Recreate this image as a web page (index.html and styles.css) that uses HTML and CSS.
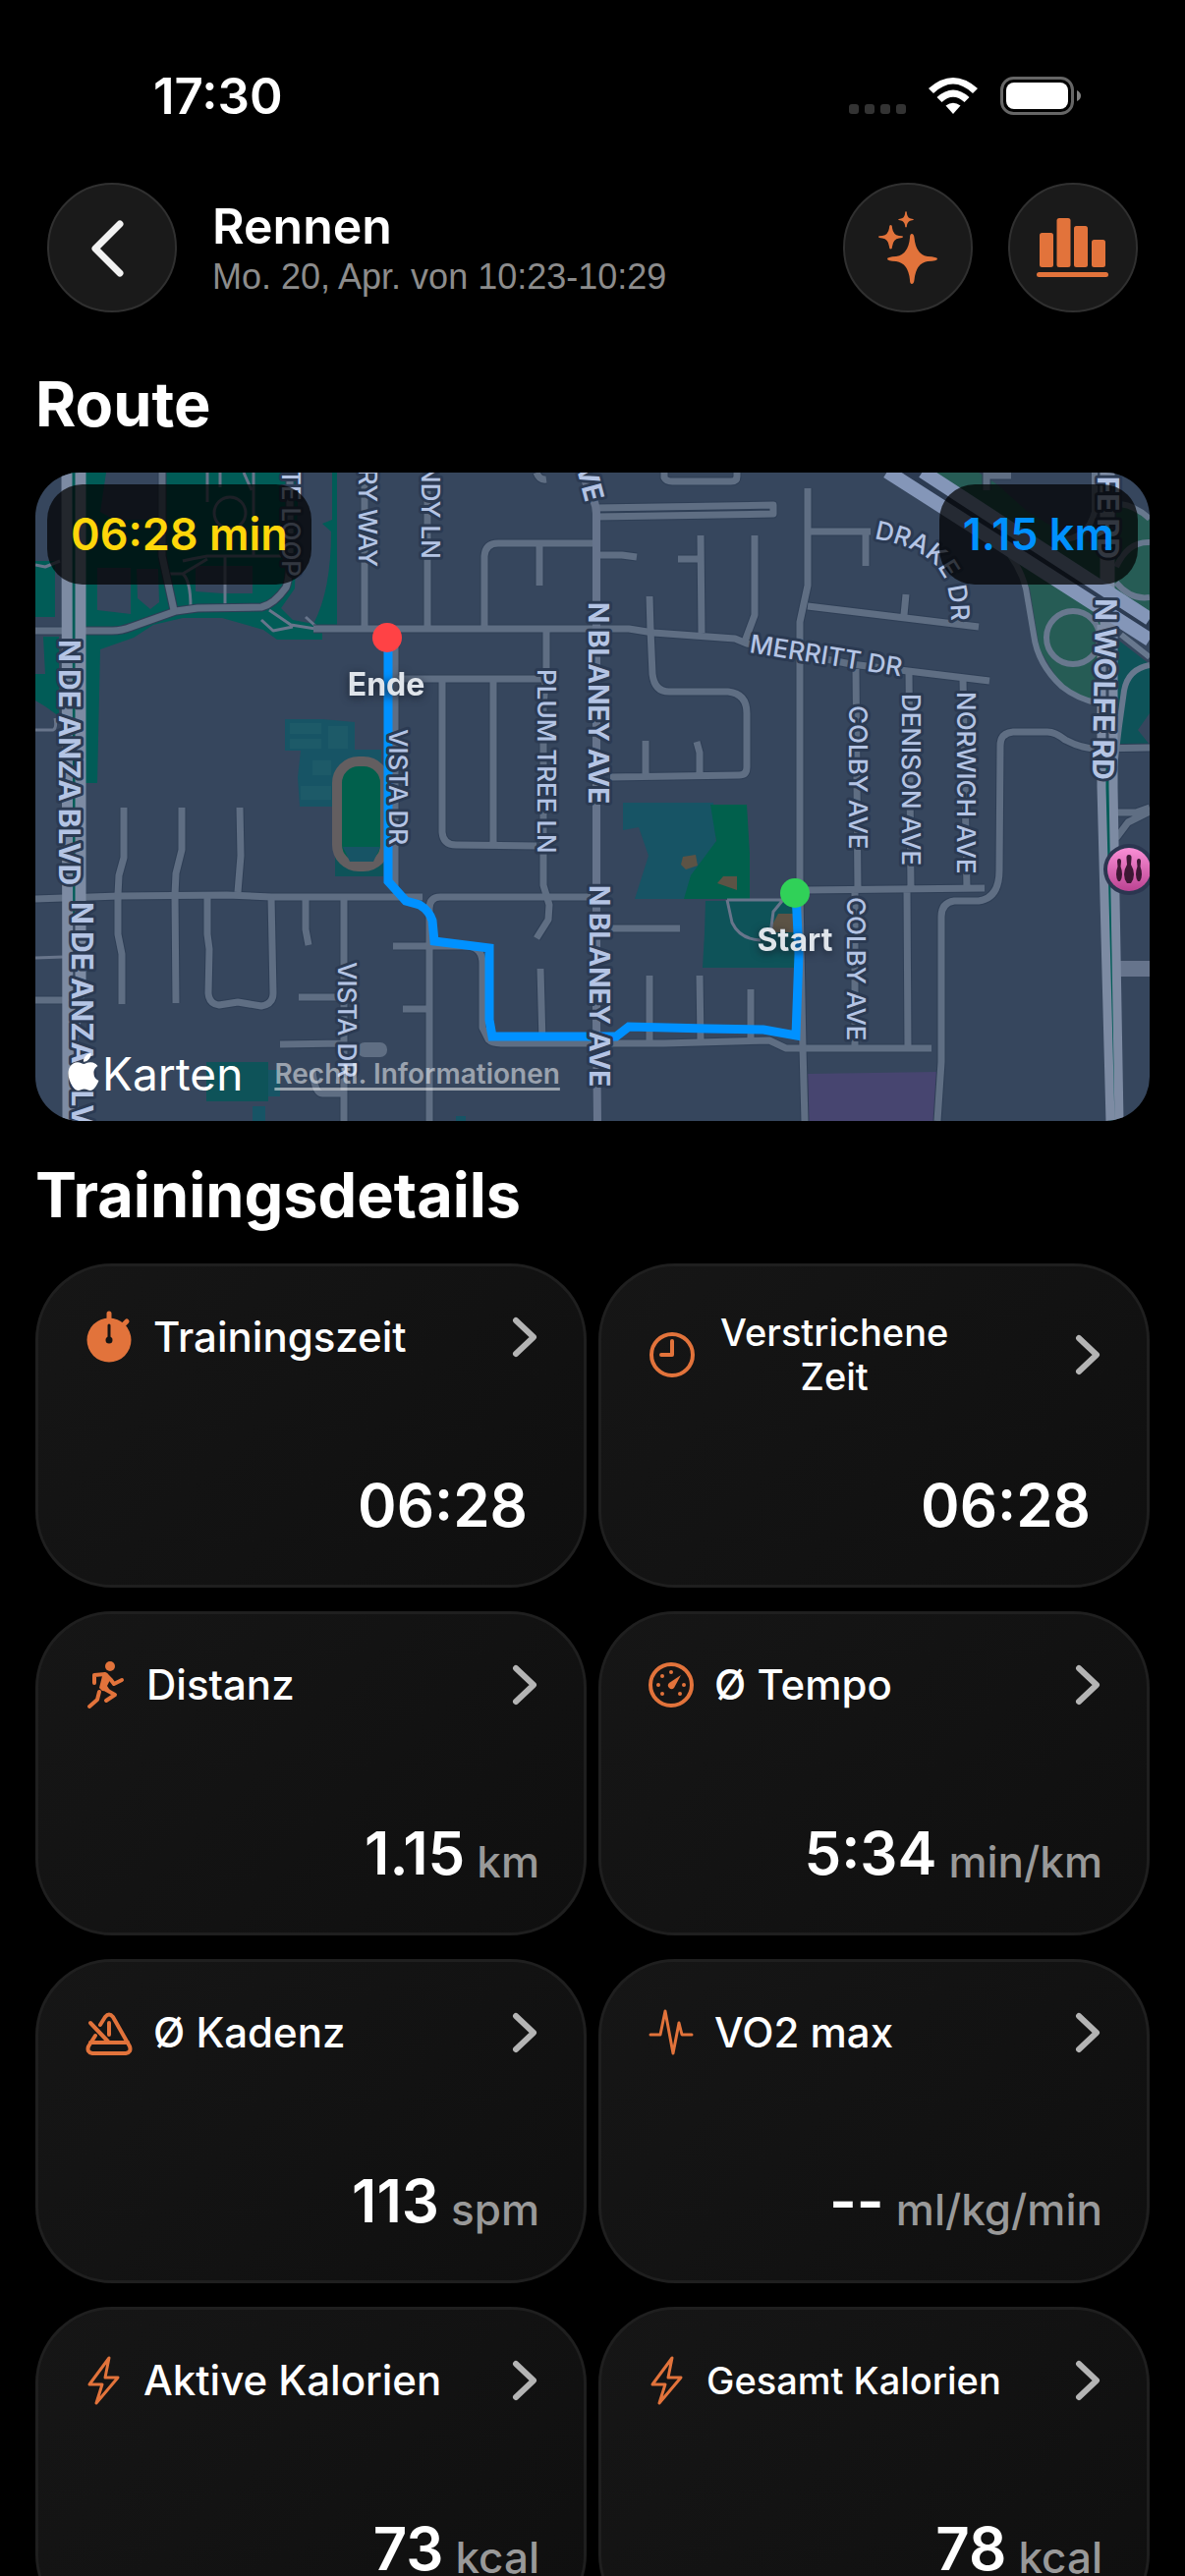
FILE: index.html
```html
<!DOCTYPE html>
<html lang="de">
<head>
  <meta charset="UTF-8" />
  <meta name="viewport" content="width=device-width, initial-scale=1.0"/>
  <title>Rennen</title>
  <link rel="stylesheet" href="styles.css">
</head>
<body>
  <div class="status-bar">
    <span class="clock">17:30</span>
    <div class="status-icons">
      <svg width="58" height="40" viewBox="0 0 58 40" fill="#333333">
        <rect x="0" y="28" width="10" height="10" rx="3"/>
        <rect x="16" y="28" width="10" height="10" rx="3"/>
        <rect x="32" y="28" width="10" height="10" rx="3"/>
        <rect x="48" y="28" width="10" height="10" rx="3"/>
      </svg>
      <svg width="52" height="40" viewBox="0 0 52 40" fill="#ffffff">
        <path d="M1 12Q26-10 51 12L46 17Q26-2 6 17Z"/>
        <path d="M9.500 21Q26 6 42.500 21L37.500 26Q26 15.500 14.500 26Z"/>
        <path d="M18.500 29.500Q26 24 33.500 29.500L26 38Z"/>
      </svg>
      <svg width="83" height="40" viewBox="0 0 83 40">
        <rect x="1.500" y="1.500" width="72" height="36" rx="12" fill="none" stroke="#666666" stroke-width="3"/>
        <rect x="6" y="6" width="63" height="27" rx="8" fill="#ffffff"/>
        <path d="M78 14Q82 16 82 19.500T78 25Z" fill="#808080"/>
      </svg>
    </div>
  </div>

  <header class="header">
    <button class="round-button" aria-label="Zurück">
      <svg viewBox="0 0 132 132"><path d="M74 42L49 67L74 92" fill="none" stroke="#f2f2f2" stroke-width="7" stroke-linecap="round" stroke-linejoin="round"/></svg>
    </button>
    <div class="header-text">
      <h1>Rennen</h1>
      <p>Mo. 20, Apr. von 10:23-10:29</p>
    </div>
    <button class="round-button" aria-label="Zusammenfassung">
      <svg viewBox="0 0 132 132" fill="#e2733b">
        <path d="M70 52Q72 52 72.500 56Q74 73 86 75Q96 75.500 96 77.500T86 80Q74 82 72.500 99Q72 103 70 103T68 99Q66.500 82 54 80Q45 79.500 45 77.500T54 75Q66.500 73 68 56Q68 52 70 52Z"/>
        <path d="M48.500 43Q50 43 50 46Q51 53 57 54Q61 54 61 55T57 56.500Q51 57 50 65Q50 67.500 48.500 67.500T47 65Q46 57 40 56.500Q36 56 36 55T40 54Q46 53 47 46Q47 43 48.500 43Z"/>
        <path d="M64 29Q65 29 65 32Q66 36 69 36.500Q72 37 72 37.500T69 38.500Q66 39 65 43Q65 45.500 64 45.500T63 43Q62 39 59 38.500Q56 38 56 37.500T59 36.500Q62 36 63 32Q63 29 64 29Z"/>
      </svg>
    </button>
    <button class="round-button" aria-label="Diagramme">
      <svg viewBox="0 0 132 132" fill="#e2733b">
        <rect x="32" y="51" width="14" height="35" rx="2.500"/>
        <rect x="49.500" y="36" width="14" height="50" rx="2.500"/>
        <rect x="67" y="44" width="14" height="42" rx="2.500"/>
        <rect x="85" y="58" width="14" height="28" rx="2.500"/>
        <rect x="29" y="91" width="73" height="5" rx="2.500"/>
      </svg>
    </button>
  </header>

  <main>
    <section>
      <h2>Route</h2>
      <div class="map-card">
        <svg class="map" viewBox="0 0 1134 660" role="img" aria-label="Karte der Route">
          <defs>
            <linearGradient id="pink" x1="0" y1="0" x2="0" y2="1">
              <stop offset="0" stop-color="#f98fd6"/>
              <stop offset="1" stop-color="#bb4392"/>
            </linearGradient>
            <path id="drake" d="M853 67Q902 76 919 98Q932 114 932 150"/>
            <g id="streets">
              <path d="M0 161H78Q88 161 98 157L143 141L165 138L230 137Q243 134 255 117Q259 108 259 80V0"/>
              <path d="M283 159H604L629 163L712 169L724 174L830 195L971 212"/>
              <path d="M335 0V159M129 0V85L141 140M399 0V159M457 159V85Q458 72 471 72H571M513 72V115"/>
              <path d="M571 36L751 33V42L571 45M640 0V5Q642 9 648 9H708Q714 9 714 4V0M510 0Q513 8 520 7M571 84H597L612 86"/>
              <path d="M677 64L678 163M654 88H677M732 64V145L722 172"/>
              <path d="M625 126L626 160L628 205Q630 223 645 223H705Q724 225 724 245V300Q724 308 716 308L585 310M621 273V307M673 274L676 285V306"/>
              <path d="M520 159V200L517 240V420L523 440L522 455L510 474M369 210H517M414 210V366Q415 379 428 379L510 380M466 210V379"/>
              <path d="M366 159V424M0 434L85 431L195 430L240 432H394M401 660V444Q401 432 412 432H565"/>
              <path d="M90 341V392L85 410L84 430V470L88 490V541M149 341V384L143 408L142 430L143 540M208 341L209 390L206 427"/>
              <path d="M175 432V470L177 485L176 530Q177 541 187 542L206 539L230 543Q242 541 242 530L240 432M275 434V465L278 481"/>
              <path d="M314 432V660M268 534H314M249 582L314 581M333 587H354M282 608Q284 632 292 632H314M0 537H28"/>
              <path d="M364 482H440Q455 483 455 500V565L461 577Q465 581 475 581H640L747 578L764 586H912M374 546H401"/>
              <path d="M514 505L516 580M625 512V578M676 512L677 578M728 526V576M585 464H656"/>
              <path d="M786 16V115L778 152V430L781 586L783 660M787 60H850M845 61V95M786 136L960 157M886 124L884 145M938 142V153"/>
              <path d="M835 200L837 425M834 425V585M889 203L891 424M887 425L888 585M944 210L948 424M784 425L966 423"/>
              <path d="M1134 280L1080 281Q1065 281 1048 272Q1038 264 1030 264H995Q982 265 982 278L981 405Q981 433 960 436H935Q922 438 922 452V600L918 660"/>
              <path d="M968 0V18M968 3H993M1098 346H1120L1134 341M1134 345L1112 356L1100 372"/>
            </g>
          </defs>
          <rect width="1134" height="660" fill="#36465d"/>

          <!-- parks, school grounds, mall -->
          <g fill="#015c57">
            <path d="M52 0H307V155L292 160V170H246L232 160L190 148H150L120 155L100 168L66 180L63 316H36V0Z"/>
            <path d="M0 90H20V147H0ZM8 167H24V248L10 238L0 232V205H10Z"/>
          </g>
          <g fill="#36465d">
            <path d="M72 0H125V48H80L66 40ZM63 97H97V144L63 140ZM103 98H125L126 132L117 139L104 128Z"/>
            <path d="M163 95H221V123H190L163 121ZM268 0H302V48L292 52L301 60Q301 120 283 154L262 150L250 138L264 118Z"/>
          </g>
          <g fill="#265c55">
            <path d="M915 0H960L1134 110V150L1090 150L1085 237L1045 218L1022 180L1012 118L985 80Z"/>
            <path d="M1100 32Q1120 35 1134 48V130L1100 112Z"/>
          </g>
          <path d="M1095 165L1134 195V245L1122 262L1134 277L1100 276Z" fill="#0e5359"/>
          <path d="M965 0H1090V65Q1070 72 1050 64L1010 40Z" fill="#36465d"/>
          <g fill="#175465">
            <path d="M254 251H292L325 254V282H352V340H269L267 310L270 283H254Z"/>
            <path d="M598 336H690L693 385L660 434H610L624 390L614 361L598 364Z"/>
            <path d="M221 645H234V660H221ZM234 608H249V635H234ZM428 655H438V660H428Z"/>
          </g>
          <path d="M259 255H291V266H259ZM259 271H291V281H259ZM298 258H318V281H298ZM282 293H301V308H282ZM270 319H301V333H270Z" fill="#1d5a68"/>
          <path d="M305 391H354V411H305ZM682 436H778V504H679L681 469ZM174 600H237V640H174Z" fill="#0e5359"/>
          <rect x="307" y="294" width="49" height="107" rx="22" fill="#01604c" stroke="#635e60" stroke-width="10"/>
          <path d="M313 381H351L344 396H320Z" fill="#175465"/>
          <path d="M687 338H724L727 388V434H660L667 410L693 375Z" fill="#01604c"/>
          <path d="M659 391L672 389L674 400L662 404L657 399ZM700 411H714V425L694 418ZM756 449H775V468H746Z" fill="#5c5345"/>
          <path d="M786 612L917 610V660H787Z" fill="#474570"/>

          <g class="footpaths">
            <path d="M175 0V30M188 0V15M212 0L220 18M222 0V85M150 90Q158 88 175 85H250M193 85V137M134 103H150Q158 110 158 137M150 103L175 88M238 140L260 155L285 159M230 150L242 161L262 157M275 147L285 156M0 94L10 96L25 90M0 262H18Q22 260 20 250M0 494L28 493"/>
            <circle cx="198" cy="41" r="16"/>
            <path d="M704 435H762M704 435L709 458Q717 475 738 476M760 436L751 447L748 470"/>
          </g>
          <use href="#streets" class="street-edge"/>
          <use href="#streets" class="street"/>
          <rect x="328" y="580" width="30" height="15" rx="7" fill="#5f6e83"/>

          <g class="ramps">
            <path d="M960 50Q1000 84 1008 118L1016 165Q1020 195 1045 218Q1060 230 1082 235"/>
            <circle cx="1056" cy="168" r="27"/>
            <path d="M1134 47Q1120 34 1104 32M1134 71Q1112 70 1100 96M1100 112Q1115 130 1134 127M1134 196Q1112 200 1108 222L1103 258L1098 300M1105 165L1134 188M1078 0V40Q1070 70 1040 68"/>
          </g>
          <g fill="none" stroke="#66748c">
            <path d="M556 0L568 28Q571 34 571 42V560L572 660" stroke-width="8"/>
            <path d="M1095 505H1134" stroke-width="16"/>
          </g>
          <path d="M39 0V460M1089 275L1096 660" fill="none" stroke="#015c57" stroke-width="6"/>
          <g fill="none" stroke="#7d8ba3">
            <path d="M32 0L33 660M46 0V520L38 580V660" stroke-width="11"/>
            <path d="M1091 0V160" stroke-width="15"/>
            <path d="M1085 155V320L1094 660M1097 155V320L1103 660" stroke-width="9"/>
          </g>
          <g fill="none">
            <path d="M885-1L1134 160" stroke="#2c3b52" stroke-width="14"/>
            <path d="M867-1L1134 170M903-1L1134 149" stroke="#8496b8" stroke-width="14"/>
          </g>

          <path class="route" d="M774 428L777 490L774 573L741 567L684 566L604 564L591 574H465L462 557V484L406 477L404 456Q401 446 391 440L377 436L359 416V168"/>

          <g class="labels">
            <text transform="translate(251 106) rotate(90)" text-anchor="end">TE LOOP</text>
            <text transform="translate(329 96) rotate(90)" text-anchor="end">RY WAY</text>
            <text transform="translate(393 88) rotate(90)" text-anchor="end">NDY LN</text>
            <text transform="translate(511 200) rotate(90)">PLUM TREE LN</text>
            <text transform="translate(360 261) rotate(90)">VISTA DR</text>
            <text transform="translate(308 498) rotate(90)">VISTA DR</text>
            <text transform="translate(828 237) rotate(90)">COLBY AVE</text>
            <text transform="translate(826 432) rotate(90)">COLBY AVE</text>
            <text transform="translate(882 225) rotate(90)">DENISON AVE</text>
            <text transform="translate(938 223) rotate(90)">NORWICH AVE</text>
            <text transform="translate(726 183) rotate(9)">MERRITT DR</text>
            <text><textPath href="#drake">DRAKE DR</textPath></text>
          </g>
          <g class="labels labels-medium">
            <text transform="translate(560 31) rotate(75)" text-anchor="end">VE</text>
            <text transform="translate(563 132) rotate(90)">N BLANEY AVE</text>
            <text transform="translate(564 420) rotate(90)">N BLANEY AVE</text>
          </g>
          <g class="labels labels-large">
            <text transform="translate(24 170) rotate(90)">N DE ANZA BLVD</text>
            <text transform="translate(37 437) rotate(90)">N DE ANZA BLVD</text>
            <text transform="translate(1081 88) rotate(90)" text-anchor="end">FE RD</text>
            <text transform="translate(1079 128) rotate(91)">N WOLFE RD</text>
          </g>

          <circle cx="1113" cy="404" r="26" fill="#2b3650"/>
          <circle cx="1113" cy="404" r="22" fill="url(#pink)"/>
          <g fill="#3c1733">
            <path d="M1113 389Q1116 389 1115.500 393L1115 399Q1118 404 1118 409T1115 418H1111Q1108 414 1108 409T1111 399L1110.500 393Q1110 389 1113 389Z"/>
            <path d="M1103 393Q1105 393 1105 396L1104.500 401Q1106 405 1106 409T1104 416H1102Q1100 413 1100 409T1101.500 401L1101 396Q1101 393 1103 393ZM1123 393Q1125 393 1125 396L1124.500 401Q1126 405 1126 409T1124 416H1122Q1120 413 1120 409T1121.500 401L1121 396Q1121 393 1123 393Z"/>
          </g>

          <circle cx="358" cy="168" r="15" fill="#ff4245"/>
          <circle cx="773" cy="428" r="15" fill="#30d158"/>
          <g class="pin-labels">
            <text x="357" y="227">Ende</text>
            <text x="773" y="487">Start</text>
          </g>
        </svg>
        <span class="badge badge-time">06:28 min</span>
        <span class="badge badge-distance">1.15 km</span>
        <div class="map-credit">
          <span class="brand">
            <svg width="38" height="38" viewBox="0 0 24 24" fill="#ffffff"><path d="M12.152 6.896c-.948 0-2.415-1.078-3.960-1.040-2.040.027-3.910 1.183-4.961 3.014-2.117 3.675-.546 9.103 1.519 12.090 1.013 1.454 2.208 3.090 3.792 3.039 1.520-.065 2.090-.987 3.935-.987 1.831 0 2.350.987 3.960.948 1.637-.026 2.676-1.480 3.676-2.948 1.156-1.688 1.636-3.325 1.662-3.415-.039-.013-3.182-1.221-3.220-4.857-.026-3.040 2.480-4.494 2.597-4.559-1.429-2.090-3.623-2.324-4.390-2.376-2-.156-3.675 1.090-4.610 1.090zM15.530 3.830c.843-1.012 1.400-2.427 1.245-3.830-1.207.052-2.662.805-3.532 1.818-.780.896-1.454 2.338-1.273 3.714 1.338.104 2.715-.688 3.559-1.701"/></svg><span>Karten</span>
          </span>
          <a href="#" class="legal">Rechtl. Informationen</a>
        </div>
      </div>
    </section>

    <section>
      <h2>Trainingsdetails</h2>
      <div class="cards">
        <a href="#" class="card">
          <div class="card-head">
            <svg class="icon" width="48" height="54" viewBox="0 0 48 54">
              <circle cx="24" cy="30" r="22.500" fill="#e2733b"/>
              <path d="M24 3V12M39 14L42 11" stroke="#e2733b" stroke-width="5" stroke-linecap="round"/>
              <path d="M24 15V30" stroke="#141414" stroke-width="3" stroke-linecap="round"/>
              <circle cx="24" cy="30" r="3.500" fill="#141414"/>
            </svg>
            <span class="label">Trainingszeit</span>
            <svg class="chevron" viewBox="0 0 28 42"><path d="M4 4L22 21L4 38"/></svg>
          </div>
          <div class="card-value"><strong>06:28</strong><span></span></div>
        </a>
        <a href="#" class="card">
          <div class="card-head">
            <svg class="icon line" width="52" height="54" viewBox="0 0 52 54">
              <circle cx="24" cy="27" r="21"/>
              <path d="M24 13V27H13"/>
            </svg>
            <span class="label label-small">Verstrichene<br>Zeit</span>
            <svg class="chevron" viewBox="0 0 28 42"><path d="M4 4L22 21L4 38"/></svg>
          </div>
          <div class="card-value"><strong>06:28</strong><span></span></div>
        </a>
        <a href="#" class="card">
          <div class="card-head">
            <svg class="icon" width="41" height="54" viewBox="0 0 41 54">
              <circle cx="25" cy="8" r="5" fill="#e2733b"/>
              <g fill="none" stroke="#e2733b" stroke-width="4" stroke-linecap="round" stroke-linejoin="round">
                <path d="M9 25V17L20 16L26 22L29 26L37 22"/>
                <path d="M21 32L30 37L21 43M14 34L12 42L4 49"/>
              </g>
              <path d="M15 15H22L26 20L22 28L26 34L17 33L14 30L17 18Z" fill="#e2733b"/>
            </svg>
            <span class="label">Distanz</span>
            <svg class="chevron" viewBox="0 0 28 42"><path d="M4 4L22 21L4 38"/></svg>
          </div>
          <div class="card-value"><strong>1.15</strong><span>km</span></div>
        </a>
        <a href="#" class="card">
          <div class="card-head">
            <svg class="icon" width="46" height="54" viewBox="0 0 46 54">
              <circle cx="23" cy="27" r="21" fill="none" stroke="#e2733b" stroke-width="4"/>
              <path d="M33 17L26 30A3.500 3.500 0 1 1 21 25Z" fill="#e2733b"/>
              <g fill="#e2733b">
                <circle cx="23" cy="14" r="2"/><circle cx="14" cy="18" r="2"/><circle cx="10" cy="27" r="2"/>
                <circle cx="14" cy="36" r="2"/><circle cx="32" cy="36" r="2"/><circle cx="36" cy="27" r="2"/>
              </g>
            </svg>
            <span class="label">Ø Tempo</span>
            <svg class="chevron" viewBox="0 0 28 42"><path d="M4 4L22 21L4 38"/></svg>
          </div>
          <div class="card-value"><strong>5:34</strong><span>min/km</span></div>
        </a>
        <a href="#" class="card">
          <div class="card-head">
            <svg class="icon line" width="48" height="54" viewBox="0 0 48 54">
              <path d="M10 30L3 41Q1 47 7 48H41Q47 47 45 41L28 11Q24 6 20 11L15 19"/>
              <path d="M5 37H43M5 17L23 36M24 17V29"/>
            </svg>
            <span class="label">Ø Kadenz</span>
            <svg class="chevron" viewBox="0 0 28 42"><path d="M4 4L22 21L4 38"/></svg>
          </div>
          <div class="card-value"><strong>113</strong><span>spm</span></div>
        </a>
        <a href="#" class="card">
          <div class="card-head">
            <svg class="icon line" width="46" height="54" viewBox="0 0 46 54">
              <path d="M2 29H12L17 5L25 48L31 17L34 29H44" stroke-width="3"/>
            </svg>
            <span class="label">VO2 max</span>
            <svg class="chevron" viewBox="0 0 28 42"><path d="M4 4L22 21L4 38"/></svg>
          </div>
          <div class="card-value"><strong>--</strong><span>ml/kg/min</span></div>
        </a>
        <a href="#" class="card">
          <div class="card-head">
            <svg class="icon line" width="38" height="54" viewBox="0 0 38 54">
              <path d="M24 4L4 31H17L11 50L33 24H20Z" stroke-width="3"/>
            </svg>
            <span class="label">Aktive Kalorien</span>
            <svg class="chevron" viewBox="0 0 28 42"><path d="M4 4L22 21L4 38"/></svg>
          </div>
          <div class="card-value"><strong>73</strong><span>kcal</span></div>
        </a>
        <a href="#" class="card">
          <div class="card-head">
            <svg class="icon line" width="38" height="54" viewBox="0 0 38 54">
              <path d="M24 4L4 31H17L11 50L33 24H20Z" stroke-width="3"/>
            </svg>
            <span class="label label-small">Gesamt Kalorien</span>
            <svg class="chevron" viewBox="0 0 28 42"><path d="M4 4L22 21L4 38"/></svg>
          </div>
          <div class="card-value"><strong>78</strong><span>kcal</span></div>
        </a>
      </div>
    </section>
  </main>
</body>
</html>
```
FILE: styles.css
```css
* {
  margin: 0;
  padding: 0;
  box-sizing: border-box;
}

body {
  font-family: 'Inter', 'Liberation Sans', sans-serif;
  background: #000000;
  color: #ffffff;
}

a {
  color: inherit;
  text-decoration: none;
}

/* Status bar */
.status-bar {
  display: flex;
  justify-content: space-between;
  align-items: center;
  padding: 68px 105px 58px 156px;
}

.clock {
  font-size: 51px;
  line-height: 60px;
  font-weight: 600;
}

.status-icons {
  display: flex;
  align-items: center;
  gap: 22px;
}

/* Header */
.header {
  display: flex;
  align-items: center;
  gap: 36px;
  padding: 0 48px 18px;
}

.header-text {
  flex: 1;
}

h1 {
  font-size: 50px;
  line-height: 60px;
  font-weight: 600;
}

.header-text p {
  font-family: 'Liberation Sans', Arial, sans-serif;
  font-size: 36px;
  line-height: 44px;
  color: #8c8c8c;
}

.round-button {
  width: 132px;
  height: 132px;
  border: 2px solid #303030;
  border-radius: 50%;
  background: #1a1a1a;
}

.round-button svg {
  display: block;
  width: 132px;
  height: 132px;
  margin: -2px;
}

main {
  padding: 0 36px 36px;
}

h2 {
  font-size: 63px;
  line-height: 80px;
  font-weight: 700;
  margin: 35px 0 30px;
}

/* Map */
.map-card {
  position: relative;
  border-radius: 45px;
  overflow: hidden;
}

.map {
  display: block;
  width: 100%;
}

.street-edge,
.street,
.ramps,
.footpaths {
  fill: none;
  stroke-linejoin: round;
}

.street-edge {
  stroke: #2e3e55;
  stroke-width: 9px;
}

.street {
  stroke: #5f6e83;
  stroke-width: 7px;
}

.ramps {
  stroke: #68788e;
  stroke-width: 6px;
}

.footpaths {
  stroke: #68758b;
  stroke-width: 3px;
}

.route {
  fill: none;
  stroke: #0091ff;
  stroke-width: 9px;
}

.labels {
  font-size: 26px;
  font-weight: 500;
  fill: #b4c4e4;
  stroke: #2b3a52;
  stroke-width: 6px;
  stroke-linejoin: round;
  paint-order: stroke;
}

.labels-medium {
  font-size: 28px;
  font-weight: 700;
}

.labels-large {
  font-size: 30px;
  font-weight: 700;
}

.pin-labels {
  font-size: 32px;
  font-weight: 700;
  fill: #dfe4ea;
  text-anchor: middle;
  filter: drop-shadow(0 2px 4px rgba(20, 28, 42, 0.9));
}

.badge {
  position: absolute;
  top: 12px;
  padding: 24px;
  border-radius: 36px;
  background: rgba(0, 0, 0, 0.72);
  font-size: 45px;
  line-height: 54px;
  font-weight: 600;
}

.badge-time {
  left: 12px;
  color: #ffd60a;
}

.badge-distance {
  right: 12px;
  color: #0091ff;
}

.map-credit {
  position: absolute;
  left: 30px;
  bottom: 21px;
  display: flex;
  align-items: center;
  gap: 32px;
}

.brand {
  display: flex;
  align-items: center;
  font-size: 46px;
  line-height: 54px;
}

.brand svg {
  margin-bottom: 4px;
}

.legal {
  font-size: 28px;
  line-height: 34px;
  font-weight: 600;
  color: rgba(255, 255, 255, 0.5);
  text-decoration: underline;
  text-decoration-thickness: 3px;
  text-decoration-skip-ink: none;
  text-underline-offset: 4px;
}

/* Detail cards */
.cards {
  display: grid;
  grid-template-columns: 1fr 1fr;
  gap: 24px 12px;
}

.card {
  display: flex;
  flex-direction: column;
  justify-content: space-between;
  min-height: 330px;
  padding: 45px;
  border: 3px solid #1f1f1f;
  border-radius: 78px;
  background: linear-gradient(135deg, #161616, #0f0f0f);
}

.card-head {
  display: flex;
  align-items: center;
}

.icon {
  flex: none;
  margin: 0 21px 0 3px;
}

.line {
  fill: none;
  stroke: #e2733b;
  stroke-width: 4px;
  stroke-linecap: round;
  stroke-linejoin: round;
}

.label {
  font-size: 42px;
  line-height: 50px;
  font-weight: 500;
  white-space: nowrap;
}

.label-small {
  font-size: 38px;
  line-height: 45px;
  text-align: center;
}

.chevron {
  flex: none;
  width: 28px;
  height: 42px;
  margin-left: auto;
  fill: none;
  stroke: #b4b4b4;
  stroke-width: 6px;
  stroke-linecap: round;
  stroke-linejoin: round;
}

.card-value {
  display: flex;
  justify-content: flex-end;
  align-items: flex-end;
  gap: 12px;
}

.card-value strong {
  font-size: 60px;
  line-height: 72px;
  font-weight: 600;
}

.card-value span {
  font-size: 44px;
  line-height: 54px;
  font-weight: 500;
  color: #999999;
}
```
